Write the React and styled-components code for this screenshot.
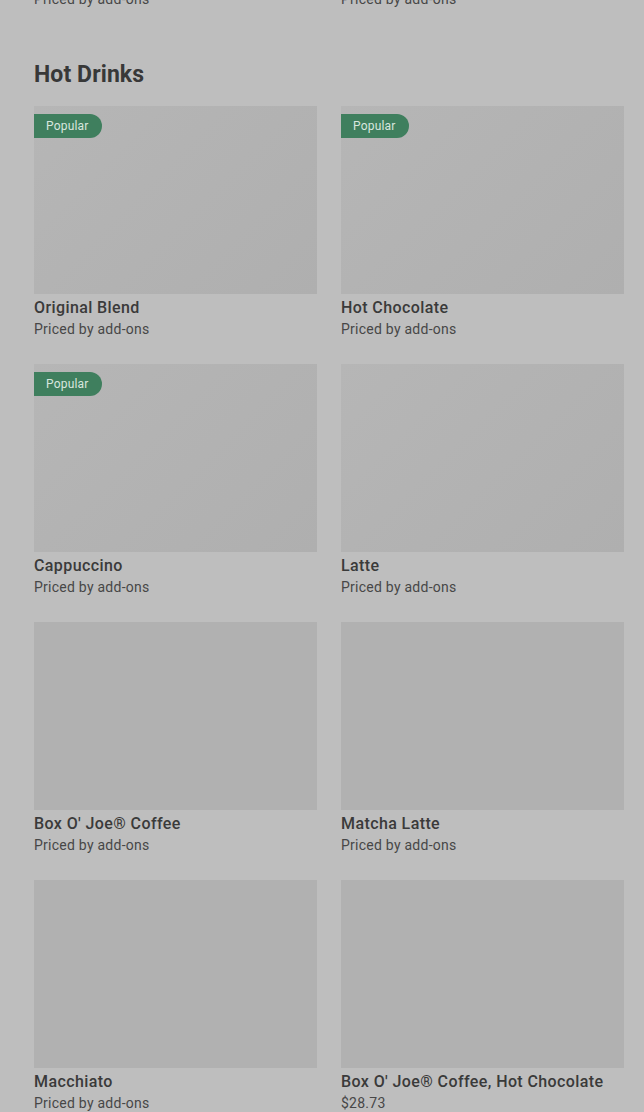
import React from "react";
import styled, { createGlobalStyle } from "styled-components";

const Global = createGlobalStyle`
  html, body { margin: 0; padding: 0; background: #bebebe; }
  body { font-family: Roboto, "Noto Sans", sans-serif; overflow: hidden; }
`;

const Page = styled.div`
  padding: 0 20px 0 34px;
  margin-top: -11px;
`;

const PrevRow = styled.div`
  display: grid;
  grid-template-columns: 1fr 1fr;
  column-gap: 24px;
`;

const Section = styled.section`
  margin-top: 51px;
`;

const Heading = styled.h2`
  margin: 0 0 17px;
  font-size: 23px;
  line-height: 28px;
  font-weight: 700;
  letter-spacing: 0.1px;
  color: #383838;
`;

const Grid = styled.div`
  display: grid;
  grid-template-columns: 1fr 1fr;
  column-gap: 24px;
  row-gap: 24px;
`;

const Card = styled.div`
  display: flex;
  flex-direction: column;
`;

const Thumb = styled.div`
  position: relative;
  height: 188px;
  background: ${(p) =>
    p.$gradient
      ? "linear-gradient(135deg, #b6b6b6 0%, #b3b3b3 40%, #afafaf 100%)"
      : "#b1b1b1"};
`;

const Badge = styled.span`
  position: absolute;
  top: 8px;
  left: 0;
  height: 24px;
  padding: 0 13px 0 12px;
  display: flex;
  align-items: center;
  background: #3f7f5e;
  color: #d8e6de;
  font-size: 12px;
  letter-spacing: 0.2px;
  border-radius: 0 12px 12px 0;
`;

const Title = styled.div`
  margin-top: 3px;
  font-size: 16px;
  line-height: 22px;
  font-weight: 500;
  letter-spacing: 0.4px;
  color: #3a3a3a;
`;

const Sub = styled.div`
  font-size: 14px;
  line-height: 21px;
  letter-spacing: 0.25px;
  color: #474747;
`;

const items = [
  { name: "Original Blend", price: "Priced by add-ons", popular: true },
  { name: "Hot Chocolate", price: "Priced by add-ons", popular: true },
  { name: "Cappuccino", price: "Priced by add-ons", popular: true },
  { name: "Latte", price: "Priced by add-ons", gradient: true },
  { name: "Box O' Joe® Coffee", price: "Priced by add-ons" },
  { name: "Matcha Latte", price: "Priced by add-ons" },
  { name: "Macchiato", price: "Priced by add-ons" },
  { name: "Box O' Joe® Coffee, Hot Chocolate", price: "$28.73" },
];

export default function App() {
  return (
    <>
      <Global />
      <Page>
        <PrevRow>
          <Sub>Priced by add-ons</Sub>
          <Sub>Priced by add-ons</Sub>
        </PrevRow>
        <Section>
          <Heading>Hot Drinks</Heading>
          <Grid>
            {items.map((it) => (
              <Card key={it.name}>
                <Thumb $gradient={it.popular || it.gradient}>
                  {it.popular && <Badge>Popular</Badge>}
                </Thumb>
                <Title>{it.name}</Title>
                <Sub>{it.price}</Sub>
              </Card>
            ))}
          </Grid>
        </Section>
      </Page>
    </>
  );
}
